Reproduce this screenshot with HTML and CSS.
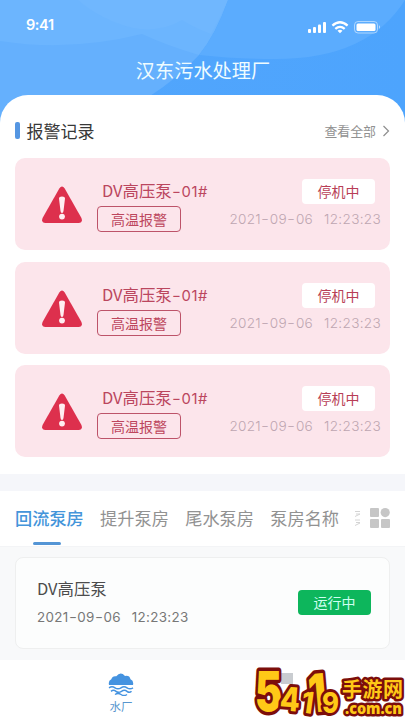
FILE: index.html
```html
<!DOCTYPE html>
<html lang="zh-CN">
<head>
<meta charset="utf-8">
<meta name="viewport" content="width=device-width, initial-scale=1">
<title>汉东污水处理厂</title>
<link rel="stylesheet" href="styles.css">
</head>
<body>
<svg class="defs" width="0" height="0">
  <symbol id="warning" viewBox="0 0 42 38">
    <path d="M18.3 2.5Q21-1.3 23.7 2.5L40.3 31.8Q42.3 36.700 37.500 37H4.500Q-.3 36.700 1.700 31.800Z" fill="#dd304d"/>
    <path d="M18 12.500Q18 10.500 21 10.500T24 12.500L22.500 25Q22.300 27 21 27T19.500 25Z" fill="#ffeef1"/>
    <circle cx="21" cy="30.600" r="2.900" fill="#ffeef1"/>
  </symbol>
</svg>
<header class="header">
  <svg class="waves" viewBox="0 0 405 130" preserveAspectRatio="none">
    <path d="M0 0H228Q216 34 199 55Q178 78 150 96V130H0Z" fill="#65b0fd"/>
    <path d="M0 0H228Q216 34 199 55Q168 46 142 34Q70 52 0 41Z" fill="#6cb5fe"/>
    <path d="M78 0H228Q219 20 211 34Q195 28 182 20Q160 33 133 28Q101 20 78 0Z" fill="#70b7fe"/>
    <path d="M228 0H405Q368 59 276 59Q235 59 199 55Q216 34 228 0Z" fill="#5bacfe"/>
  </svg>
  <div class="status">
    <span class="clock">9:41</span>
    <svg class="signals" width="74" height="16" viewBox="0 0 74 16" fill="#fff">
      <rect x="1" y="9" width="3" height="4" rx="1"/><rect x="6" y="7" width="3" height="6" rx="1"/><rect x="11" y="4.500" width="3" height="8.500" rx="1"/><rect x="16" y="2" width="3" height="11" rx="1"/>
      <g fill="none" stroke="#fff" stroke-width="2.300"><path d="M25.400 5.600Q33 -1.200 40.600 5.600"/><path d="M28.300 8.900Q33 4.800 37.700 8.900"/></g>
      <path d="M30.500 10.700Q33 8.800 35.500 10.700L33 13.300Z"/>
      <rect x="47.500" y="1.500" width="23" height="11.500" rx="3.500" fill="none" stroke="#fff" stroke-opacity=".5"/>
      <rect x="49.500" y="3.500" width="19" height="7.500" rx="1.500"/><path d="M72 5.300Q74 7 72 9Z" opacity=".6"/>
    </svg>
  </div>
  <h1 class="title">汉东污水处理厂</h1>
</header>
<main class="sheet">
  <div class="section-head">
    <i class="marker"></i><h2>报警记录</h2>
    <a class="more">查看全部<svg width="8" height="12" viewBox="0 0 8 12"><path d="M1.500 1L6.500 6L1.500 11" fill="none" stroke="#8e8e8e" stroke-width="1.200"/></svg></a>
  </div>
  <section class="alarms">
    <article class="alarm">
      <svg class="warn"><use href="#warning"/></svg>
      <div class="info"><h3>DV高压泵<span class="num"><b>-</b>01#</span></h3><span class="tag">高温报警</span></div>
      <div class="meta"><span class="stopped">停机中</span><time class="date"><span>2021<b>-</b>09<b>-</b>06</span> <span>12:23:23</span></time></div>
    </article>
    <article class="alarm">
      <svg class="warn"><use href="#warning"/></svg>
      <div class="info"><h3>DV高压泵<span class="num"><b>-</b>01#</span></h3><span class="tag">高温报警</span></div>
      <div class="meta"><span class="stopped">停机中</span><time class="date"><span>2021<b>-</b>09<b>-</b>06</span> <span>12:23:23</span></time></div>
    </article>
    <article class="alarm">
      <svg class="warn"><use href="#warning"/></svg>
      <div class="info"><h3>DV高压泵<span class="num"><b>-</b>01#</span></h3><span class="tag">高温报警</span></div>
      <div class="meta"><span class="stopped">停机中</span><time class="date"><span>2021<b>-</b>09<b>-</b>06</span> <span>12:23:23</span></time></div>
    </article>
  </section>
</main>
<nav class="tabs">
  <span class="tab active">回流泵房</span><span class="tab">提升泵房</span><span class="tab">尾水泵房</span><span class="tab">泵房名称</span>
  <svg class="next-tab" width="6" height="18" viewBox="0 0 6 18"><path d="M0 2.500H5M1 5H5M0 7.500L5 5M0 11H5M1 13.500H5M0 16.500L5 14" fill="none" stroke="#d4d4d4"/></svg>
  <svg class="grid-icon" width="20" height="20" viewBox="0 0 20 20" fill="#c6c6c6"><rect width="9" height="9" rx="1"/><circle cx="15.200" cy="4.600" r="4.600"/><rect y="11" width="9" height="9" rx="1"/><rect x="11" y="11" width="9" height="9" rx="1"/></svg>
</nav>
<section class="pumps">
  <article class="pump">
    <div><h3>DV高压泵</h3><time class="date"><span>2021<b>-</b>09<b>-</b>06</span> <span>12:23:23</span></time></div>
    <span class="running">运行中</span>
  </article>
</section>
<footer class="bottom">
  <div class="nav-item">
    <svg width="26" height="23" viewBox="0 0 26 23"><path d="M1 12Q0 7.500 3.300 6.200Q4.500 2.500 8.300 3.300Q12.500-2 17 3Q21.500 2 22.500 6.200Q26 7.500 25 12Z" fill="#4593e0"/><path d="M1 14.800Q4 12.800 7 14.800T13 14.800T19 14.800T25 14.800M3 18.300Q5.500 16.300 8 18.300T13.500 18.300T19 18.300T23.500 18.300M7 21.500Q10 19.500 13 21.500T19 21.500" fill="none" stroke="#4593e0" stroke-width="1.500"/></svg>
    <span>水厂</span>
  </div>
  <div class="nav-item second"><i class="square"></i></div>
</footer>
<svg class="watermark" width="155" height="60" viewBox="250 660 155 60">
  <g class="mark">
    <text class="big" x="255" y="711" font-size="55" textLength="27" lengthAdjust="spacingAndGlyphs">5</text>
    <text class="mid" x="280" y="711" font-size="33" textLength="20" lengthAdjust="spacingAndGlyphs" transform="rotate(4 290 700)">4</text>
    <text class="mid" x="302" y="713" font-size="30" textLength="12" lengthAdjust="spacingAndGlyphs" transform="rotate(8 307 700)">1</text>
    <text class="big" x="309" y="712" font-size="53" textLength="18" lengthAdjust="spacingAndGlyphs" transform="rotate(-5 317 700)">1</text>
    <text class="mid" x="322" y="713" font-size="29" textLength="17" lengthAdjust="spacingAndGlyphs">9</text>
    <text class="small" x="345" y="714" font-size="15" textLength="57" lengthAdjust="spacingAndGlyphs">.com.cn</text>
    <text class="small cn" x="342" y="697" font-size="20" textLength="61">手游网</text>
  </g>
</svg>
</body>
</html>
```
FILE: styles.css
```css
* { box-sizing: border-box; margin: 0; padding: 0; }
body { width: 405px; height: 720px; overflow: hidden; display: flex; flex-direction: column; background: #fff; font-family: "Noto Sans CJK SC", sans-serif; }
h1, h2, h3 { font-weight: 400; }
svg { display: block; flex: none; }
.defs { position: absolute; }
.header { position: relative; flex: none; height: 130px; background: linear-gradient(90deg, #53a6fc, #4da4fd); color: #fff; }
.waves { position: absolute; inset: 0; width: 100%; height: 100%; }
.status { position: relative; height: 50px; padding: 19px 24px 0 26px; display: flex; justify-content: space-between; }
.clock { font: 600 14.5px/12px Inter, sans-serif; letter-spacing: -.4px; }
.signals { margin-top: 1px; }
.title { position: relative; text-align: center; font-size: 19.200px; line-height: 30px; margin-top: 5px; padding-left: 1px; color: #effcff; }
.sheet { position: relative; flex: none; margin-top: -35px; height: 379px; padding: 21px 15px 0; border-radius: 28px 28px 0 0; background: #fff; }
.section-head { height: 30px; display: flex; align-items: center; }
.marker { width: 5px; height: 17px; border-radius: 2px; background: #5596e2; margin: 0 6.500px 1px 0; }
h2 { font-size: 17px; line-height: 28px; color: #383838; }
.more { margin-left: auto; display: flex; align-items: center; gap: 6px; font-size: 12.900px; line-height: 18px; color: #919191; margin-bottom: 1px; }
.alarms { display: flex; flex-direction: column; gap: 11.500px; margin-top: 12px; }
.alarm { height: 92px; padding: 18px 9px 0 26px; border-radius: 10px; background: #fce5eb; display: flex; }
.warn { width: 42px; height: 38px; margin-top: 10px; }
.info { margin-left: 14px; }
.alarm h3 { font-size: 16.400px; line-height: 28px; height: 30px; padding-left: 5px; color: #bb465e; white-space: nowrap; }
.num { font: 400 14.800px Inter, sans-serif; letter-spacing: .6px; }
b { display: inline-block; font-weight: inherit; margin: 0 1.200px; transform: scaleX(1.3); }
.tag { display: block; width: 84px; height: 26px; border: 1px solid #bd5369; border-radius: 4px; text-align: center; font-size: 14px; line-height: 24px; color: #bd465d; }
.meta { margin-left: auto; display: flex; flex-direction: column; align-items: flex-end; padding-top: 3px; }
.stopped { width: 73px; height: 25px; margin-right: 6px; border-radius: 4px; background: #fff; color: #b83e56; text-align: center; font-size: 14px; line-height: 25px; }
.date { display: flex; gap: 11px; font: 300 13.600px/16px Inter, sans-serif; letter-spacing: .3px; white-space: nowrap; }
.alarm .date { color: #bea6b1; margin-top: 7px; }
.tabs { flex: none; height: 72px; border-top: 17px solid #f5f6fa; display: flex; padding: 13px 15px 0; background: #fff; }
.tab { position: relative; width: 69px; margin-right: 16.100px; font-size: 17.200px; line-height: 28px; color: #929292; white-space: nowrap; }
.active { color: #4495da; font-weight: 500; }
.active::after { content: ""; position: absolute; left: 18px; top: 38px; width: 28px; height: 3px; border-radius: 2px; background: #5495d5; }
.next-tab { margin-top: 5px; }
.grid-icon { margin: 4px 0 0 auto; }
.pumps { flex: none; height: 114px; padding: 10px 15px 0; background: #f8f9fa; border-top: 1px solid #f3f4f6; }
.pump { height: 92px; padding: 16px 18px 0 21px; background: #fcfdfd; border: 1px solid #eeefef; border-radius: 8px; display: flex; justify-content: space-between; }
.pump h3 { font-size: 16.400px; line-height: 28px; color: #4c4c4c; }
.pump .date { color: #777; margin-top: 7px; font-weight: 400; font-size: 13.400px; }
.running { width: 73px; height: 25px; margin-top: 16px; border-radius: 4px; background: #0db65c; color: #cffff0; text-align: center; font-size: 14px; line-height: 25px; }
.bottom { flex: 1; display: flex; background: #fff; padding: 13px 0 0 108px; }
.nav-item { width: 26px; display: flex; flex-direction: column; align-items: center; color: #5896ce; font-size: 11.500px; line-height: 18px; white-space: nowrap; }
.nav-item span { margin-top: 1px; }
.second { margin-left: 140px; }
.square { width: 12px; height: 11px; margin-left: 18px; background: #c9ccd0; }
.second { margin-left: 131px; }
.watermark { position: absolute; right: 0; bottom: 0; }
.mark { font-family: "Open Sans", sans-serif; font-weight: 800; fill: #ffc917; stroke: #7c0e0b; stroke-width: 6px; stroke-linejoin: round; paint-order: stroke; }
.mark .big { font-family: Inter, sans-serif; font-weight: 900; stroke-width: 7px; }
.mark .mid { font-family: Inter, sans-serif; font-weight: 800; }
.mark .small { stroke-width: 5px; }
.mark .cn { font-family: "Noto Sans CJK SC", sans-serif; font-weight: 700; }
```
